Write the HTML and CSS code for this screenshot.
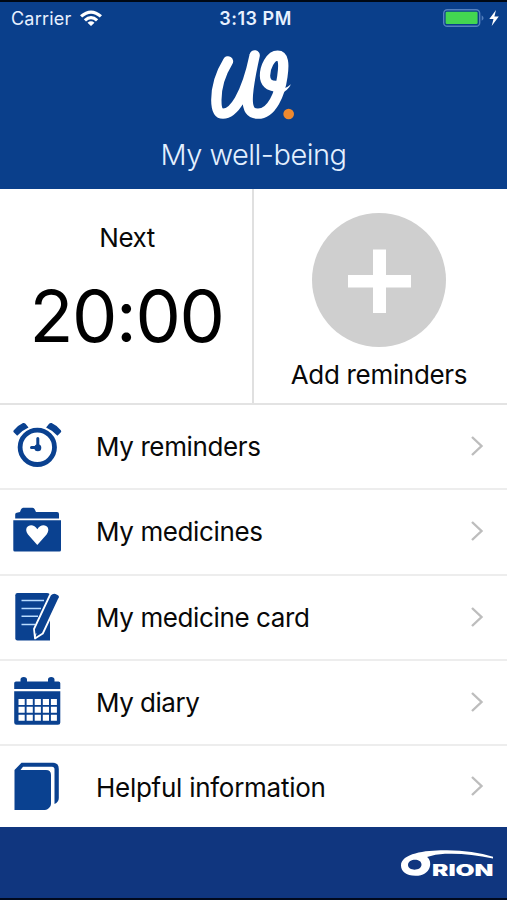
FILE: index.html
```html
<!DOCTYPE html>
<html lang="en">
<head>
<meta charset="utf-8">
<title>My well-being</title>
<link rel="stylesheet" href="styles.css">
</head>
<body>
<div class="app">
  <header class="header">
    <div class="status">
      <div class="carrier"><span>Carrier</span>
        <svg class="wifi" viewBox="0 0 22 16"><path d="M0 5.3Q11-4.3 22 5.3L19.8 7.6Q11-.2 2.2 7.6ZM3.8 9.2Q11 2.8 18.2 9.2L16 11.4Q11 7.2 6 11.4ZM7.5 12.7Q11 9.8 14.5 12.7L11 16Z"/></svg>
      </div>
      <span class="clock">3:13 PM</span>
      <div class="power">
        <svg class="battery" viewBox="0 0 41 18"><rect class="shell" x=".7" y=".7" width="36" height="16.6" rx="3.6"/><rect class="charge" x="2.6" y="2.8" width="32" height="12.2" rx="1.2"/><path class="tip" d="M38.7 6.2Q42.5 9 38.7 11.8Z"/></svg>
        <svg class="bolt" viewBox="0 0 10 16"><path d="M7 0 .3 9H4.5L2.7 16 9.8 6.5H5.4Z"/></svg>
      </div>
    </div>
    <svg class="logo" viewBox="60 24 258 216"><path class="pen" d="M114 64C95 95 79 138 79 180C79 210 85 221 99 221C130 221 168 170 194 46C182 100 173 145 173 178C173 211 184 221 204 221C246 221 270 160 277 110C283 70 280 47 263 47C241 47 225 82 225 107C225 128 238 139 260 138"/><path class="flick" d="M240 150Q282 153 303 133Q294 153 268 163Z"/><circle class="dot" cx="296" cy="222" r="16"/></svg>
    <h1 class="title">My well-being</h1>
  </header>
  <section class="panels">
    <div class="panel next"><span class="label">Next</span><span class="time">20:00</span></div>
    <div class="panel add">
      <svg class="plus" viewBox="0 0 134 134"><circle cx="67" cy="67" r="67"/><path d="M61 36.5H74V62H99V74.5H74V100H61V74.5H36V62H61Z"/></svg>
      <span class="add-label">Add reminders</span>
    </div>
  </section>
  <nav class="menu">
    <a class="row"><svg class="icon" viewBox="0 0 50 50"><circle class="ring" cx="24.3" cy="25.3" r="17.2"/><path d="M.8 8.2Q4.5 3.5 10 1Q11.5.6 12.5 1.8L15.5 5.6Q9 8.5 4.2 13.8L.7 10.3Q-.2 9.3.8 8.2ZM47.8 8.2Q44.1 3.5 38.6 1Q37.1.6 36.1 1.8L33.1 5.6Q39.6 8.5 44.4 13.8L47.9 10.3Q48.8 9.3 47.8 8.2Z"/><path class="hands" d="M24.8 16.5V25.5H18.5"/><circle cx="24.8" cy="25.7" r="3.5"/></svg><span class="t1">My reminders</span><svg class="chev" viewBox="0 0 12 20"><path d="M1 1 10.5 10 1 19"/></svg></a>
    <a class="row"><svg class="icon folder" viewBox="0 0 50 50"><path d="M2.2 14.5V10.5Q2.2 9 3.7 8.7L7 8Q8 4 10 3.7H19.5Q21.5 3.7 23 8H44Q46 8 46 10V14.5ZM.3 16.2H48V46Q48 47.5 46.5 47.5H1.8Q.3 47.5.3 46Z"/><path class="white" d="M24.3 41 15 30.5C9 22 20 17.5 24.3 25.2C28.6 17.5 39.6 22 33.6 30.5Z"/></svg><span class="t2">My medicines</span><svg class="chev" viewBox="0 0 12 20"><path d="M1 1 10.5 10 1 19"/></svg></a>
    <a class="row"><svg class="icon card" viewBox="0 0 50 50"><path d="M4.5 2H34Q37 2 37 5V49.5H4.5Q2.3 49.5 2.3 47.3V4.2Q2.3 2 4.5 2Z"/><path class="lines" d="M8.5 9.4H31M8.5 17.4H28M8.5 25.3H25M8.5 33.5H22"/><path class="pencil" d="M37 4Q40.5.2 44.5 3Q48.3 5 46 8L29.8 42.5 22 47.5 21 38Z"/><path class="nib" d="M21.8 46.8 23 42.5"/></svg><span class="t3">My medicine card</span><svg class="chev" viewBox="0 0 12 20"><path d="M1 1 10.5 10 1 19"/></svg></a>
    <a class="row"><svg class="icon" viewBox="0 0 50 50"><path d="M1.2 12V6Q1.2 4.5 3 4.5H7.5V2.4Q7.5-.1 10.7-.1T14 2.4V4.5H35V2.4Q35-.1 38.2-.1T41.5 2.4V4.5H45.5Q47.3 4.5 47.3 6.3V12ZM1.2 14.3H47.3V45.5Q47.3 47.8 45 47.8H3.5Q1.2 47.8 1.2 45.5Z"/><path class="white" d="M5.5 22h6.2v6H5.5zm8.1 0h6.2v6h-6.2zm8.1 0h6.2v6h-6.2zm8.1 0H36v6h-6.2zm8.1 0h6v6h-6zM5.5 29.8h6.2v6H5.5zm8.1 0h6.2v6h-6.2zm8.1 0h6.2v6h-6.2zm8.1 0H36v6h-6.2zm8.1 0h6v6h-6zM5.5 37.8h6.2v6H5.5zm8.1 0h6.2v6h-6.2zm8.1 0h6.2v6h-6.2zm8.1 0H36v6h-6.2zm8.1 0h6v6h-6z"/></svg><span class="t4">My diary</span><svg class="chev" viewBox="0 0 12 20"><path d="M1 1 10.5 10 1 19"/></svg></a>
    <a class="row last"><svg class="icon" viewBox="0 0 50 50"><path d="M1.5 8 8.5.7H40Q45.8.7 45.8 7V36Q45.8 40 41.5 42V7.5Q41.5 4.8 39 4.8H10L7.5 8H33Q38 8 38 13V42Q38 44.3 36 46Q34 48 32 48H1.5Z"/></svg><span class="t5">Helpful information</span><svg class="chev" viewBox="0 0 12 20"><path d="M1 1 10.5 10 1 19"/></svg></a>
  </nav>
  <footer class="footer">
    <svg class="orion" viewBox="0 0 94 28"><path fill-rule="evenodd" d="M0 15.5C0 3 26 0 46 .3Q72 .5 92 6.8V8.5Q66 2.8 44 3.8Q34 4.3 26 7C32 11 30.5 25.8 14.5 25.8C5 25.8 0 21 0 15.5ZM7 15C7 21.3 20.5 21.3 20.5 14.5C20.5 7.8 7 8.2 7 15Z"/><text x="31" y="25.6" textLength="61.5" lengthAdjust="spacingAndGlyphs">RION</text></svg>
  </footer>
</div>
</body>
</html>
```
FILE: styles.css
```css
* { box-sizing: border-box; }
body { margin: 0; background: #fff; font-family: Inter, "Liberation Sans", sans-serif; color: #080808; }
svg { display: block; flex: none; overflow: visible; }
.app { width: 507px; height: 900px; display: flex; flex-direction: column; overflow: hidden; }
.header { height: 189px; background: #0a3f8b; border-top: 2px solid #000814; color: #fff; display: flex; flex-direction: column; align-items: center; }
.status { width: 100%; height: 32px; padding: 0 8px 0 11px; display: grid; grid-template-columns: 1fr auto 1fr; align-items: center; font-size: 18px; line-height: 33px; color: #e8f1ff; }
.carrier { display: flex; align-items: center; gap: 9px; letter-spacing: .2px; }
.wifi { width: 22px; height: 16px; margin-bottom: 2px; fill: #fff; }
.clock { font-weight: 600; font-size: 18px; letter-spacing: .5px; padding-left: 1px; }
.power { display: flex; justify-content: flex-end; align-items: center; gap: 5px; margin-bottom: 2px; }
.battery { width: 41px; height: 18px; }
.shell { fill: none; stroke: #5580bd; stroke-width: 1.4; }
.charge { fill: #43d651; }
.tip { fill: #5580bd; }
.bolt { width: 10px; height: 16px; fill: #fff; }
.logo { width: 86px; height: 72px; margin: 14px 2px 0 0; }
.pen { fill: none; stroke: #fff; stroke-width: 31; stroke-linecap: round; stroke-linejoin: round; }
.flick { fill: #fff; }
.dot { fill: #ee892f; }
.title { margin: 17px 0 0; font-size: 29px; line-height: 36px; font-weight: 300; letter-spacing: -.52px; color: #e3f0ff; white-space: nowrap; }
.panels { height: 216px; display: grid; grid-template-columns: 254px 253px; border-bottom: 2px solid #e3e3e3; }
.panel { display: flex; flex-direction: column; align-items: center; }
.next { border-right: 2px solid #e0e0e0; padding-left: 2px; }
.add { padding-right: 3px; }
.label { margin-top: 33px; font-size: 26px; line-height: 32px; letter-spacing: -.5px; }
.time { margin-top: 22px; margin-right: 1px; font-size: 72px; line-height: 80px; letter-spacing: -1.4px; color: #000; white-space: nowrap; }
.plus { width: 134px; height: 134px; margin-top: 24px; fill: #cfcfcf; }
.plus path { fill: #fff; }
.add-label { margin-top: 12px; font-size: 26px; line-height: 32px; letter-spacing: -.32px; white-space: nowrap; }
.menu { height: 422px; display: grid; grid-template-rows: repeat(4, 85.25px) 1fr; }
.row { display: flex; align-items: center; padding: 0 24px 0 13px; border-bottom: 2px solid #ededed; font-size: 26px; line-height: 32px; }
.last { border: 0; }
.row span { flex: 1; margin-left: 33px; white-space: nowrap; }
.t1, .t2, .t3 { letter-spacing: -.38px; }
.t4 { letter-spacing: -.48px; }
.t5 { letter-spacing: -.27px; }
.t3, .t4, .t5 { padding-top: 2px; }
.icon { width: 50px; height: 50px; fill: #0a4190; }
.folder { margin-bottom: 5px; }
.card { margin-bottom: 3px; }
.ring { fill: none; stroke: #0a4190; stroke-width: 4.8; }
.hands { fill: none; stroke: #0a4190; stroke-width: 3; stroke-linecap: round; }
.white { fill: #fff; }
.lines { fill: none; stroke: #b9dcff; stroke-width: 1.5; }
.pencil { stroke: #fff; stroke-width: 1.8; stroke-linejoin: round; }
.nib { fill: none; stroke: #fff; stroke-width: 1; }
.chev { width: 12px; height: 20px; margin-bottom: 1px; fill: none; stroke: #bdbdbd; stroke-width: 2.4; }
.footer { height: 73px; background: #10367f; border-bottom: 2px solid #00091d; display: flex; justify-content: flex-end; padding: 23px 12px 0 0; }
.orion { width: 94px; height: 28px; fill: #fff; }
.orion text { font-family: Inter, sans-serif; font-weight: 900; font-size: 16px; }
```
